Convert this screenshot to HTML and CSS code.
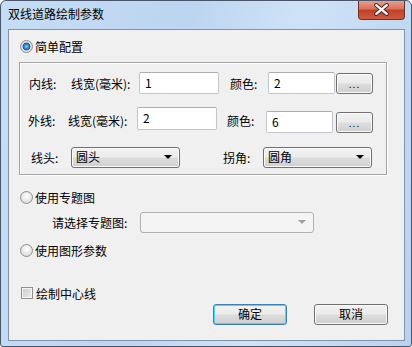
FILE: index.html
```html
<!DOCTYPE html>
<html lang="zh-CN">
<head>
    <meta charset="UTF-8">
    <title>双线道路绘制参数</title>
    <link rel="stylesheet" href="styles.css">
</head>
<body>

<div class="window">
    <div class="titlebar">
        <span class="title">双线道路绘制参数</span>
        <div class="close">
            <svg width="47" height="19" viewBox="0 0 47 19">
                <path d="M18 5 L29 14 M29 5 L18 14" stroke="#4a2a22" stroke-width="4.5" stroke-linecap="round"/>
                <path d="M18 5 L29 14 M29 5 L18 14" stroke="#ffffff" stroke-width="2.4" stroke-linecap="round"/>
            </svg>
        </div>
    </div>

    <div class="client">
        <div class="option first">
            <span class="radio checked"></span>
            <span>简单配置</span>
        </div>

        <div class="group">
            <div class="row row-inner">
                <span class="lbl lbl-kind">内线:</span>
                <span class="lbl lbl-width">线宽(毫米):</span>
                <div class="edit edit-width">1</div>
                <span class="lbl lbl-color">颜色:</span>
                <div class="edit edit-color">2</div>
                <div class="btn btn-more">...</div>
            </div>
            <div class="row row-outer">
                <span class="lbl lbl-kind">外线:</span>
                <span class="lbl lbl-width">线宽(毫米):</span>
                <div class="edit edit-width">2</div>
                <span class="lbl lbl-color">颜色:</span>
                <div class="edit edit-color">6</div>
                <div class="btn btn-more">...</div>
            </div>
            <div class="row row-cap">
                <span class="lbl lbl-cap">线头:</span>
                <div class="combo">圆头<span class="arrow"></span></div>
                <span class="lbl lbl-join">拐角:</span>
                <div class="combo">圆角<span class="arrow"></span></div>
            </div>
        </div>

        <div class="option second">
            <span class="radio"></span>
            <span>使用专题图</span>
        </div>
        <div class="sub-row">
            <span class="lbl lbl-theme">请选择专题图:</span>
            <div class="combo combo-disabled"><span class="arrow"></span></div>
        </div>
        <div class="option third">
            <span class="radio"></span>
            <span>使用图形参数</span>
        </div>

        <div class="option check-row">
            <span class="check"></span>
            <span>绘制中心线</span>
        </div>

        <div class="buttons">
            <div class="btn btn-default">确定</div>
            <div class="btn">取消</div>
        </div>
    </div>
</div>

</body>
</html>
```

FILE: styles.css
```css
body {
    margin: 0;
    font-family: "Noto Sans CJK SC", "Liberation Sans", sans-serif;
    font-size: 12px;
    color: #000;
}

.window {
    width: 412px;
    height: 347px;
    box-sizing: border-box;
    border: 1px solid #49566a;
    border-radius: 6px 6px 3px 3px;
    background: linear-gradient(100deg, #c6ddf5 0%, #bcd5f0 40%, #cfe3f7 65%, #b9d2ee 100%);
    display: flex;
    flex-direction: column;
    overflow: hidden;
}

.titlebar {
    height: 28px;
    display: flex;
    align-items: flex-start;
}

.title {
    padding-left: 7px;
    line-height: 26px;
}

.close {
    margin-left: auto;
    margin-right: 6px;
    margin-top: -1px;
    width: 47px;
    height: 20px;
    box-sizing: border-box;
    border: 1px solid #6b3328;
    border-top: none;
    border-radius: 0 0 4px 4px;
    background: linear-gradient(#e8a593 0%, #d9725e 45%, #c0412a 55%, #cf5a3f 100%);
    display: flex;
    align-items: center;
    justify-content: center;
}

.close svg {
    display: block;
}

.client {
    flex: 1;
    margin: 0 6px 5px 7px;
    border: 1px solid #8193aa;
    background: #f0f0f0;
    padding-left: 10px;
    display: flex;
    flex-direction: column;
}

.option {
    height: 16px;
    display: flex;
    align-items: center;
}

.option.first {
    margin-top: 8px;
}

.option.second {
    margin-top: 14px;
}

.option.third {
    margin-top: 9px;
}

.option.check-row {
    margin-top: 27px;
}

.radio {
    width: 13px;
    height: 13px;
    box-sizing: border-box;
    margin-left: 1px;
    margin-right: 2px;
    border: 1px solid #8f8f8f;
    border-radius: 50%;
    background: radial-gradient(circle at 50% 40%, #ffffff 0%, #e6e6e6 55%, #cdcdcd 100%);
}

.radio.checked {
    background: radial-gradient(circle, #7fd0ff 0%, #2a8ad8 30%, #1a4f8f 45%, #e4e4e4 55%, #c8c8c8 100%);
}

.check {
    width: 12px;
    height: 12px;
    box-sizing: border-box;
    margin-left: 2px;
    margin-right: 3px;
    border: 1px solid #8f8f8f;
    background: linear-gradient(135deg, #c9c9c9, #efefef);
    box-shadow: inset 0 0 0 1px #f4f4f4;
}

.group {
    margin-top: 8px;
    width: 368px;
    box-sizing: border-box;
    border: 1px solid #a5a5a5;
    box-shadow: inset 1px 1px 0 #ffffff, 1px 1px 0 #ffffff;
    padding: 9px 0 6px 0;
}

.row {
    display: flex;
    align-items: center;
}

.row-inner {
    height: 22px;
}

.row-outer {
    height: 26px;
    margin-top: 13px;
}

.row-cap {
    height: 21px;
    margin-top: 14px;
}

.lbl {
    white-space: nowrap;
    flex-shrink: 0;
}

.row-inner .lbl-kind {
    margin-left: 9px;
    width: 42px;
}

.row-inner .lbl-width {
    width: 68px;
}

.row-inner .lbl-color {
    margin-left: 11px;
    width: 38px;
}

.row-outer .lbl-kind {
    margin-left: 8px;
    width: 40px;
}

.row-outer .lbl-width {
    width: 69px;
}

.row-outer .lbl-color {
    margin-left: 10px;
    width: 39px;
}

.lbl-cap {
    margin-left: 11px;
    width: 40px;
}

.lbl-join {
    margin-left: 43px;
    width: 40px;
}

.edit {
    box-sizing: border-box;
    height: 22px;
    border: 1px solid #c3c6cc;
    border-top-color: #abadb3;
    border-radius: 2px;
    background: #fff;
    padding-left: 5px;
    line-height: 19px;
    flex-shrink: 0;
}

.edit-width {
    width: 80px;
}

.edit-color {
    width: 67px;
}

.row-outer .edit-width {
    align-self: flex-start;
    height: 23px;
}

.row-outer .edit-color,
.row-outer .btn-more {
    align-self: flex-end;
}

.btn {
    box-sizing: border-box;
    width: 74px;
    height: 21px;
    border: 1px solid #707070;
    border-radius: 3px;
    background: linear-gradient(#f2f2f2 0%, #ebebeb 48%, #dddddd 52%, #cfcfcf 100%);
    box-shadow: inset 0 0 0 1px #fbfbfb;
    text-align: center;
    line-height: 18px;
    flex-shrink: 0;
}

.btn-more {
    width: 37px;
    margin-left: 1px;
    font-size: 10px;
    line-height: 20px;
    letter-spacing: 1px;
}

.row-outer .btn-more {
    margin-left: 3px;
    height: 21px;
}

.btn-default {
    border-color: #3c7fb1;
    box-shadow: inset 0 0 0 1px #48d8fb;
}

.combo {
    position: relative;
    box-sizing: border-box;
    width: 109px;
    height: 21px;
    border: 1px solid #707070;
    border-radius: 3px;
    background: linear-gradient(#f2f2f2 0%, #ebebeb 48%, #dddddd 52%, #cfcfcf 100%);
    box-shadow: inset 0 0 0 1px #fafafa;
    padding-left: 4px;
    line-height: 18px;
    flex-shrink: 0;
}

.arrow {
    position: absolute;
    right: 7px;
    top: 7px;
    width: 0;
    height: 0;
    border-left: 4px solid transparent;
    border-right: 4px solid transparent;
    border-top: 4px solid #000;
}

.sub-row {
    margin-top: 7px;
    height: 21px;
    display: flex;
    align-items: center;
    margin-left: 33px;
}

.lbl-theme {
    width: 88px;
}

.combo-disabled {
    width: 174px;
    border-color: #adb2b5;
    background: #f4f4f4;
    box-shadow: none;
}

.combo-disabled .arrow {
    border-top-color: #a0a0a0;
}

.buttons {
    margin-top: 3px;
    display: flex;
    justify-content: flex-end;
    gap: 27px;
    padding-right: 16px;
}
```
